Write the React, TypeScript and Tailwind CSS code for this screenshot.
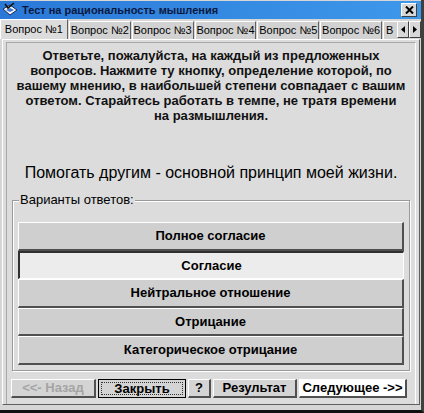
import React, { useState } from 'react';

const tabs = ['Вопрос №1', 'Вопрос №2', 'Вопрос №3', 'Вопрос №4', 'Вопрос №5', 'Вопрос №6'];

const answers = [
  'Полное согласие',
  'Согласие',
  'Нейтральное отношение',
  'Отрицание',
  'Категорическое отрицание',
];

// small app icon in the caption bar
const AppIcon = () => (
  <svg width="16" height="16" viewBox="0 0 16 16">
    <path d="M1 7 L8 3 L15 8 L8 13 Z" fill="#f4f4f4" stroke="#1b2b5a" strokeWidth="1" />
    <path d="M4 8 L8 6 L12 8 L8 10 Z" fill="#3a78d0" />
    <path d="M3 2 L6 6 L12 1" fill="none" stroke="#111" strokeWidth="1.6" />
  </svg>
);

const raised =
  'border-t border-l border-t-white border-l-white border-b-2 border-r-2 border-b-[#505050] border-r-[#505050]';

const App = () => {
  const [selected, setSelected] = useState(1);

  return (
    <div
      className="w-[424px] h-[413px] bg-[#d6d6d6] flex flex-col border-r-[3px] border-b-[3px] border-r-[#404040] border-b-[#101010] overflow-hidden"
      style={{ fontFamily: '"Liberation Sans", Arial, sans-serif' }}
    >
      {/* caption */}
      <div className="h-[18px] mt-[1px] flex items-center bg-gradient-to-r from-[#2a78d8] to-[#3e98ea]">
        <div className="ml-[2px] mr-[4px]">
          <AppIcon />
        </div>
        <span className="text-[11px] font-bold text-[#0a1840] whitespace-nowrap">Тест на рациональность мышления</span>
        <div className="ml-auto mr-[4px] w-[16px] h-[14px] bg-[#d8d8d8] border border-t-white border-l-white border-r-[#404040] border-b-[#404040] flex items-center justify-center">
          <svg width="9" height="8" viewBox="0 0 9 8">
            <path d="M1 0.5 L8 7.5 M8 0.5 L1 7.5" stroke="#000" strokeWidth="2" />
          </svg>
        </div>
      </div>

      {/* tab strip */}
      <div className="h-[20px] flex items-end whitespace-nowrap">
        <div className="h-[20px] w-[68px] bg-[#dcdcdc] border-t border-l border-t-white border-l-white border-r border-r-[#606060] flex items-center justify-center text-[11px] text-black">
          {tabs[0]}
        </div>
        {tabs.slice(1).map((t) => (
          <div
            key={t}
            className="h-[18px] w-[62px] ml-[1px] bg-[#d2d2d2] border-t border-l border-t-white border-l-white border-r border-r-[#606060] flex items-center justify-center text-[11px] text-black"
          >
            {t}
          </div>
        ))}
        <div className="h-[18px] w-[14px] ml-[1px] bg-[#d2d2d2] border-t border-l border-t-white border-l-white text-[11px] pl-[2px] leading-[17px]">
          В
        </div>
        <div className="h-[18px] flex">
          <div className="w-[12px] h-[17px] bg-[#d8d8d8] border border-t-white border-l-white border-r-[#404040] border-b-[#404040] flex items-center justify-center">
            <svg width="4" height="7" viewBox="0 0 4 7"><path d="M4 0 L0 3.5 L4 7 Z" fill="#000" /></svg>
          </div>
          <div className="w-[12px] h-[17px] bg-[#d8d8d8] border border-t-white border-l-white border-r-[#404040] border-b-[#404040] flex items-center justify-center">
            <svg width="4" height="7" viewBox="0 0 4 7"><path d="M0 0 L4 3.5 L0 7 Z" fill="#000" /></svg>
          </div>
        </div>
      </div>

      {/* page */}
      <div className="flex-1 ml-[2px] mr-[1px] bg-[#dcdcdc] border-l border-t border-l-white border-t-white border-r border-r-[#606060] border-b border-b-[#606060] flex flex-col">
        <div className="flex-1 mx-[3px] mt-[2px] border-l border-t border-l-[#a8a8a8] border-t-[#a8a8a8] border-r border-r-white flex flex-col">
          <p className="mt-[5px] text-center text-[13px] font-bold leading-[15px] text-[#111] whitespace-nowrap">
            Ответьте, пожалуйста, на каждый из предложенных
            <br />
            вопросов. Нажмите ту кнопку, определение которой, по
            <br />
            вашему мнению, в наибольшей степени совпадает с вашим
            <br />
            ответом. Старайтесь работать в темпе, не тратя времени
            <br />
            на размышления.
          </p>
          <p className="mt-[40px] text-center text-[16px] leading-[20px] text-black whitespace-nowrap">
            Помогать другим - основной принцип моей жизни.
          </p>

          {/* answers group */}
          <div className="relative mt-[17px] mx-[5px] h-[171px] border border-[#9a9a9a] shadow-[inset_1px_1px_0_#fff,1px_1px_0_#fff] px-[5px] pt-[21px]">
            <span className="absolute left-[6px] top-[-9px] px-[1px] bg-[#dcdcdc] text-[13px] leading-[16px] text-black">
              Варианты ответов:
            </span>
            <div className="grid grid-rows-5 h-[143px]">
              {answers.map((a, i) =>
                i === selected ? (
                  <button
                    key={a}
                    onClick={() => setSelected(i)}
                    className="bg-[#ececec] border-t-2 border-l-2 border-t-[#303030] border-l-[#303030] border-b border-r border-b-white border-r-white text-[13px] font-bold text-black"
                  >
                    {a}
                  </button>
                ) : (
                  <button
                    key={a}
                    onClick={() => setSelected(i)}
                    className={`bg-[#cfcfcf] ${raised} text-[13px] font-bold text-black`}
                  >
                    {a}
                  </button>
                )
              )}
            </div>
          </div>

          {/* bottom buttons */}
          <div className="mt-[8px] mx-[4px] flex h-[19px] gap-[2px] text-[13px] font-bold whitespace-nowrap">
            <div className={`w-[85px] bg-[#d4d4d4] ${raised} flex items-center justify-center text-[#a4a4a4]`}>
              {'<<- Назад'}
            </div>
            <div className="w-[88px] bg-[#d4d4d4] border border-black p-[2px] flex">
              <div className="flex-1 border border-dotted border-[#333] flex items-center justify-center text-black">
                Закрыть
              </div>
            </div>
            <div className={`w-[23px] bg-[#d4d4d4] ${raised} flex items-center justify-center text-black`}>?</div>
            <div className={`w-[84px] bg-[#d4d4d4] ${raised} flex items-center justify-center text-black`}>
              Результат
            </div>
            <div className={`w-[108px] bg-white ${raised} flex items-center justify-center text-black`}>
              {'Следующее ->>'}
            </div>
          </div>
          <div className="flex-1" />
        </div>
      </div>
      <div className="h-[5px]" />
    </div>
  );
};

export default App;
